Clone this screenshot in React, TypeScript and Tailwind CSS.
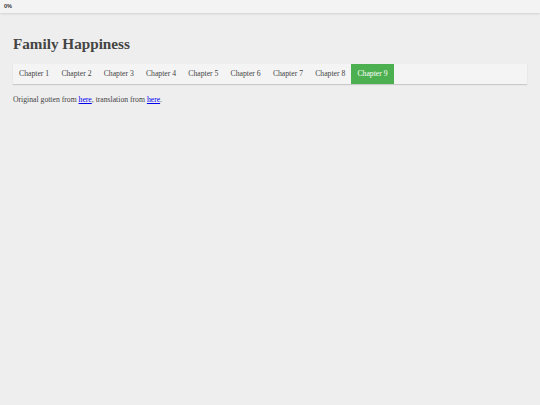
import React from 'react';

const chapters = [1, 2, 3, 4, 5, 6, 7, 8, 9];
const active = 9;

export default function App() {
  return (
    <div className="min-h-[405px] bg-[#eeeeee] text-[#444] font-['Liberation_Serif',serif]">
      <div className="h-[13px] bg-[#f3f3f3] shadow-[0_1px_2px_rgba(0,0,0,0.12)] px-[4px] flex items-center">
        <span className="text-[5.5px] font-bold text-[#333] font-['Liberation_Sans',sans-serif]">0%</span>
      </div>
      <div className="px-[13px]">
        <h1 className="pt-[21px] text-[15.2px] font-bold leading-[20px] text-[#444]">Family Happiness</h1>
        <nav className="mt-[10px] flex bg-[#f4f4f4] shadow-[0_1px_1px_rgba(0,0,0,0.15)] h-[20px]">
          {chapters.map((n) => (
            <a
              key={n}
              className={
                n === active
                  ? 'flex items-center px-[6.1px] text-[7.7px] bg-[#4caf50] text-white'
                  : 'flex items-center px-[6.1px] text-[7.7px] text-[#444]'
              }
            >
              Chapter {n}
            </a>
          ))}
        </nav>
        <p className="mt-[9.5px] text-[7.7px] leading-[11px] text-[#444]">
          Original gotten from <a className="text-[#0000ee] underline">here</a>, translation from{' '}
          <a className="text-[#0000ee] underline">here</a>.
        </p>
      </div>
    </div>
  );
}
